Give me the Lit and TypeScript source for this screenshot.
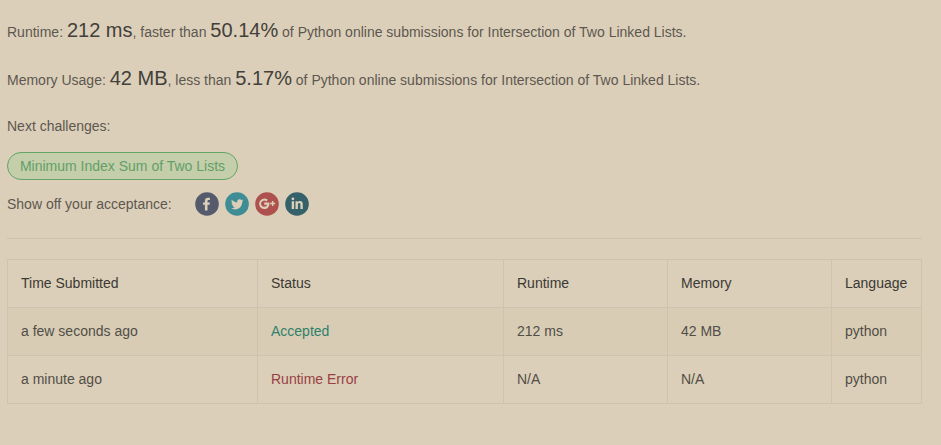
import { LitElement, html, css, svg } from "lit";
import { customElement } from "lit/decorators.js";

const socialIcons = [
  {
    label: "Facebook",
    color: "#555a6c",
    glyph: svg`<path d="M9.900 18.400v-5.600H8v-2.400h1.900V8.900c0-2.100 1.200-3.200 3.100-3.200.9 0 1.700.1 1.900.1v2.200h-1.200c-1 0-1.200.5-1.200 1.200v1.200h2.400l-.3 2.400h-2.100v5.600z"/>`,
  },
  {
    label: "Twitter",
    color: "#3e8d95",
    glyph: svg`<path transform="translate(6 6.1) scale(.52)" d="M23.953 4.57a10 10 0 0 1-2.825.775 4.958 4.958 0 0 0 2.163-2.723c-.951.555-2.005.959-3.127 1.184a4.92 4.92 0 0 0-8.384 4.482C7.69 8.095 4.067 6.13 1.64 3.162a4.822 4.822 0 0 0-.666 2.475c0 1.71.87 3.213 2.188 4.096a4.904 4.904 0 0 1-2.228-.616v.06a4.923 4.923 0 0 0 3.946 4.827 4.996 4.996 0 0 1-2.212.085 4.936 4.936 0 0 0 4.604 3.417 9.867 9.867 0 0 1-6.102 2.105c-.39 0-.779-.023-1.17-.067a13.995 13.995 0 0 0 7.557 2.209c9.053 0 13.998-7.496 13.998-13.985 0-.21 0-.42-.015-.63A9.935 9.935 0 0 0 24 4.59z"/>`,
  },
  {
    label: "Google Plus",
    color: "#ae504d",
    glyph: svg`<path d="M9.200 10.600v2.200h2.900c-.3 1.300-1.400 2-2.900 2a3.100 3.100 0 1 1 2.000-5.400l1.600-1.600a5.300 5.300 0 1 0-3.600 9.300c3.200 0 5.200-2.200 5.200-5.300 0-.4 0-.8-.1-1.200zM16.900 8.900v1.800h-1.800v1.500h1.800V14h1.500v-1.800h1.800v-1.500h-1.800V8.900z"/>`,
  },
  {
    label: "LinkedIn",
    color: "#35616b",
    glyph: svg`<path d="M6.700 9.200h2.400V17H6.700zM7.900 5.400a1.400 1.400 0 1 1 0 2.800 1.400 1.400 0 0 1 0-2.800zM10.500 9.200h2.300v1.050c.4-.7 1.200-1.250 2.300-1.250 2.200 0 2.700 1.400 2.700 3.400V17h-2.400v-4c0-1-.1-1.900-1.200-1.900-1.100 0-1.300.9-1.300 1.900v4h-2.400z"/>`,
  },
];

const headings = ["Time Submitted", "Status", "Runtime", "Memory", "Language"];

const submissions = [
  { time: "a few seconds ago", status: "Accepted", tone: "accepted", runtime: "212 ms", memory: "42 MB", language: "python" },
  { time: "a minute ago", status: "Runtime Error", tone: "error", runtime: "N/A", memory: "N/A", language: "python" },
];

@customElement("submission-table")
export class SubmissionTable extends LitElement {
  static styles = css`
    :host { display: block; }
    .table {
      border-top: 1px solid #cfc3ad;
      border-left: 1px solid #cfc3ad;
    }
    .row {
      display: grid;
      grid-template-columns: 250px 246px 164px 164px 90px;
    }
    .row:nth-child(2) { background: #d8ccb5; }
    .cell {
      box-sizing: border-box;
      height: 48px;
      padding-left: 13px;
      line-height: 47px;
      border-right: 1px solid #cfc3ad;
      border-bottom: 1px solid #cfc3ad;
      white-space: nowrap;
      color: #514e47;
    }
    .head { color: #3a3934; }
    .accepted { color: #2f806b; }
    .error { color: #983f44; }
  `;

  render() {
    return html`
      <div class="table">
        <div class="row">${headings.map((h) => html`<div class="cell head">${h}</div>`)}</div>
        ${submissions.map(
          (s) => html`<div class="row">
            <div class="cell">${s.time}</div>
            <div class="cell ${s.tone}">${s.status}</div>
            <div class="cell">${s.runtime}</div>
            <div class="cell">${s.memory}</div>
            <div class="cell">${s.language}</div>
          </div>`
        )}
      </div>
    `;
  }
}

@customElement("app-root")
export class AppRoot extends LitElement {
  static styles = css`
    :host {
      display: block;
      box-sizing: border-box;
      height: 445px;
      padding: 16px 19px 0 7px;
      overflow: hidden;
      background: #dccfb9;
      color: #5c5850;
      font: 14px/20px "Liberation Sans", Arial, sans-serif;
    }
    .stat {
      height: 28px;
      line-height: 28px;
      margin-bottom: 20px;
      white-space: nowrap;
    }
    .value { font-size: 20px; color: #42403a; }
    .next { margin-top: 24px; }
    .challenge {
      box-sizing: border-box;
      width: 231px;
      height: 28px;
      margin-top: 16px;
      border: 1px solid #62a567;
      border-radius: 14px;
      background: #c4ceaa;
      color: #62a067;
      line-height: 26px;
      text-align: center;
      white-space: nowrap;
    }
    .share {
      display: flex;
      align-items: center;
      height: 24px;
      margin-top: 12px;
    }
    .share-label { width: 188px; }
    .icons { display: flex; gap: 6px; }
    .icon { display: block; width: 24px; height: 24px; }
    .glyph { fill: #dccfb9; }
    .divider {
      height: 1px;
      margin: 22px 0 20px;
      background: #cfc3ad;
    }
  `;

  render() {
    return html`
      <div class="stat">Runtime: <span class="value">212 ms</span>, faster than <span class="value">50.14%</span> of Python online submissions for Intersection of Two Linked Lists.</div>
      <div class="stat">Memory Usage: <span class="value">42 MB</span>, less than <span class="value">5.17%</span> of Python online submissions for Intersection of Two Linked Lists.</div>
      <div class="next">Next challenges:</div>
      <div class="challenge">Minimum Index Sum of Two Lists</div>
      <div class="share">
        <div class="share-label">Show off your acceptance:</div>
        <div class="icons">
          ${socialIcons.map(
            (i) => html`<svg class="icon" viewBox="0 0 24 24" role="img" aria-label=${i.label}>
              <circle cx="12" cy="12" r="11.8" fill=${i.color}></circle>
              <g class="glyph">${i.glyph}</g>
            </svg>`
          )}
        </div>
      </div>
      <div class="divider"></div>
      <submission-table></submission-table>
    `;
  }
}
